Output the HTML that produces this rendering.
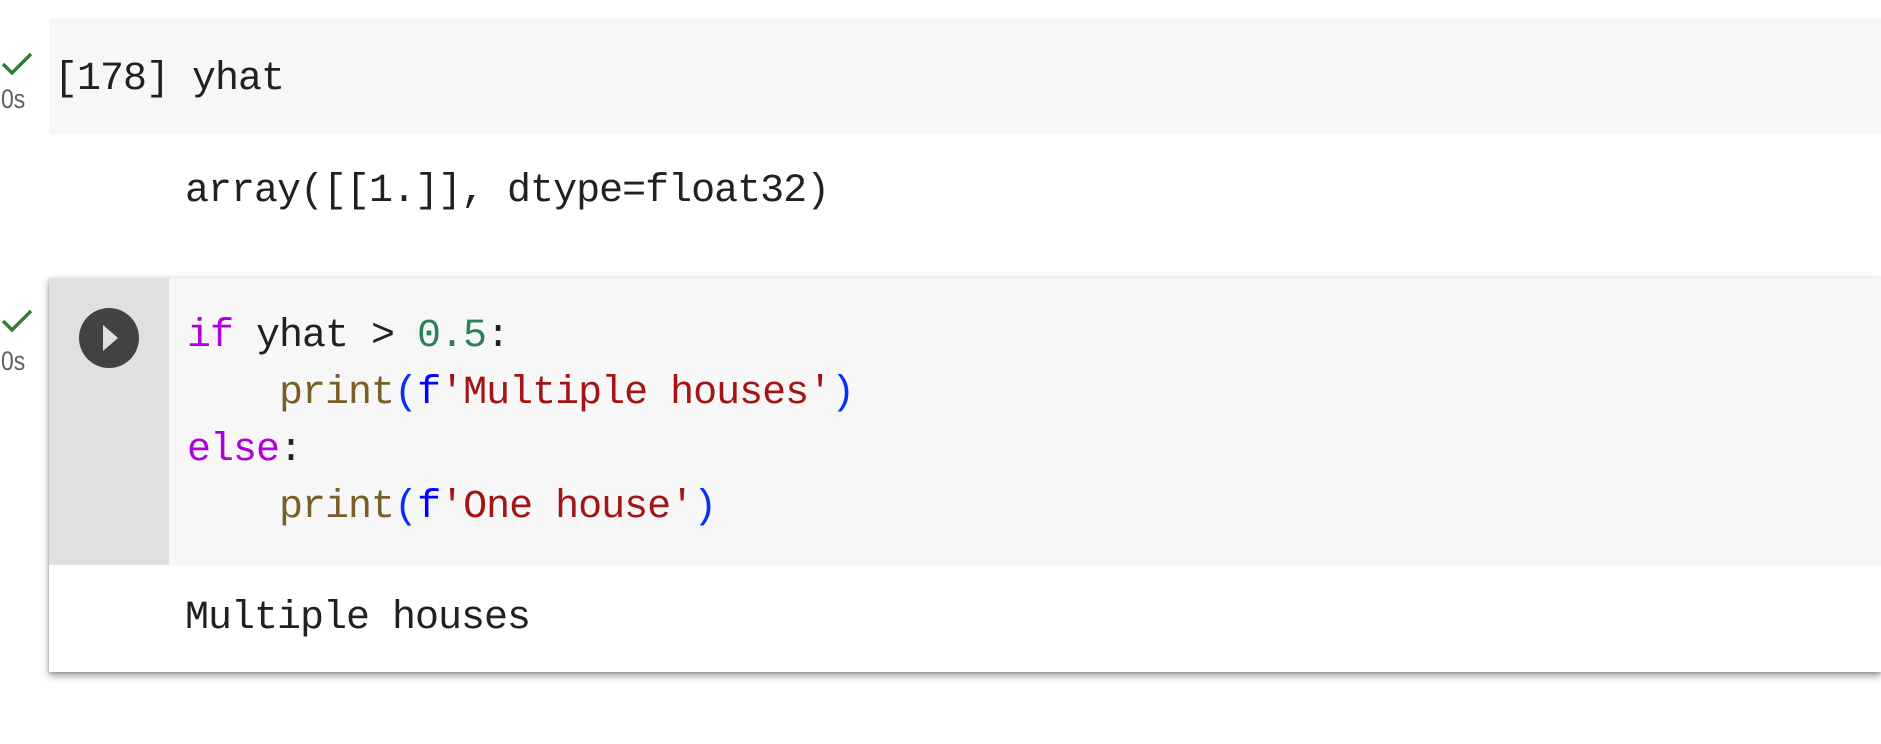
<!DOCTYPE html>
<html><head><meta charset="utf-8"><style>
body{margin:0;width:1881px;height:744px;background:#fff;position:relative;overflow:hidden;font-family:"Liberation Mono",monospace;}
.m{position:absolute;font-size:40px;letter-spacing:-1px;white-space:pre;line-height:1;color:#212121}
.s{position:absolute;font-family:"Liberation Sans",sans-serif;font-size:27px;color:#616161;transform:scaleX(0.85);transform-origin:left}
.k{color:#af00db}.n{color:#288259}.p{color:#795e26}.b{color:#0431fa}.f{color:#0000ff}.st{color:#a31515}
</style></head><body>
<div style="position:absolute;left:49px;top:19px;right:0;height:115px;background:#f7f7f7"></div>
<svg style="position:absolute;left:1px;top:51px" width="32" height="26" viewBox="0 0 32 26"><path d="M2 13 L11 22 L30 3" stroke="#2e7d32" stroke-width="3.4" fill="none"/></svg>
<div class="s" style="left:1px;top:84px">0s</div>
<div class="m" style="left:54px;top:60px">[178] yhat</div>
<div class="m" style="left:185px;top:172px">array([[1.]], dtype=float32)</div>

<div style="position:absolute;left:49px;top:278px;right:0;height:394px;background:#fff;box-shadow:0 4px 8px rgba(0,0,0,0.35),0 1px 3px rgba(0,0,0,0.25)"></div>
<div style="position:absolute;left:49px;top:278px;width:120px;height:287px;background:#e0e0e0"></div>
<div style="position:absolute;left:169px;top:278px;right:0;height:287px;background:#f7f7f7"></div>
<svg style="position:absolute;left:79px;top:308px" width="60" height="60" viewBox="0 0 60 60"><circle cx="30" cy="30" r="30" fill="#424242"/><path d="M24 17 L39 30 L24 43Z" fill="#e0e0e0"/></svg>
<svg style="position:absolute;left:1px;top:308px" width="32" height="26" viewBox="0 0 32 26"><path d="M2 13 L11 22 L30 3" stroke="#2e7d32" stroke-width="3.4" fill="none"/></svg>
<div class="s" style="left:1px;top:346px">0s</div>
<div class="m" style="left:187px;top:317px"><span class="k">if</span> yhat &gt; <span class="n">0.5</span>:</div>
<div class="m" style="left:187px;top:374px">    <span class="p">print</span><span class="b">(</span><span class="f">f</span><span class="st">'Multiple houses'</span><span class="b">)</span></div>
<div class="m" style="left:187px;top:431px"><span class="k">else</span>:</div>
<div class="m" style="left:187px;top:488px">    <span class="p">print</span><span class="b">(</span><span class="f">f</span><span class="st">'One house'</span><span class="b">)</span></div>
<div class="m" style="left:185px;top:599px">Multiple houses</div>
</body></html>
